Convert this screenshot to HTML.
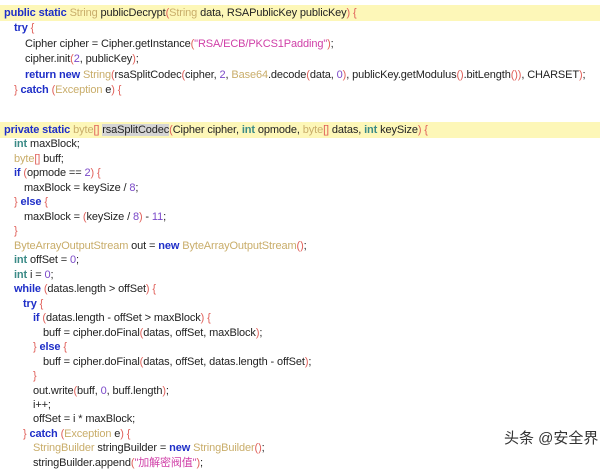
<!DOCTYPE html>
<html><head><meta charset="utf-8"><style>
body{margin:0;width:611px;height:459px;background:#fff;overflow:hidden;position:relative;font-family:"Liberation Sans",Arial,sans-serif;font-size:11px;color:#222;letter-spacing:-0.12px}
.l{position:absolute;white-space:pre;line-height:15px;height:15px}
.hl{position:absolute;left:0;width:600px;height:16px;background:#fdf7b8}
.k{color:#1f2fc8;font-weight:bold}
.t{color:#c9ad6a}
.i{color:#3a8a86;font-weight:bold}
.p{color:#e0605a}
.s{color:#d040a8}
.n{color:#7a48c8}
.sel{background:#d4d4d4}
.wm{position:absolute;left:504px;top:427px;font-family:"Liberation Sans","Noto Sans CJK SC",sans-serif;font-size:15px;color:#333;letter-spacing:0}
</style></head><body>
<div class="hl" style="top:5px"></div>
<div class="hl" style="top:122px"></div>
<div class="l" style="left:4px;top:6px"><span class="k">public static</span> <span class="t">String</span> publicDecrypt<span class="p">(</span><span class="t">String</span> data, RSAPublicKey publicKey<span class="p">) {</span></div>
<div class="l" style="left:14px;top:21px"><span class="k">try</span> <span class="p">{</span></div>
<div class="l" style="left:25px;top:37px">Cipher cipher = Cipher.getInstance<span class="p">(</span><span class="s">"RSA/ECB/PKCS1Padding"</span><span class="p">)</span>;</div>
<div class="l" style="left:25px;top:52px">cipher.init<span class="p">(</span><span class="n">2</span>, publicKey<span class="p">)</span>;</div>
<div class="l" style="left:25px;top:68px"><span class="k">return new</span> <span class="t">String</span><span class="p">(</span>rsaSplitCodec<span class="p">(</span>cipher, <span class="n">2</span>, <span class="t">Base64</span>.decode<span class="p">(</span>data, <span class="n">0</span><span class="p">)</span>, publicKey.getModulus<span class="p">()</span>.bitLength<span class="p">())</span>, CHARSET<span class="p">)</span>;</div>
<div class="l" style="left:14px;top:83px"><span class="p">}</span> <span class="k">catch</span> <span class="p">(</span><span class="t">Exception</span> e<span class="p">) {</span></div>
<div class="l" style="left:4px;top:123px"><span class="k">private static</span> <span class="t">byte</span><span class="p">[]</span> <span class="sel">rsaSplitCodec</span><span class="p">(</span>Cipher cipher, <span class="i">int</span> opmode, <span class="t">byte</span><span class="p">[]</span> datas, <span class="i">int</span> keySize<span class="p">) {</span></div>
<div class="l" style="left:14px;top:137px"><span class="i">int</span> maxBlock;</div>
<div class="l" style="left:14px;top:152px"><span class="t">byte</span><span class="p">[]</span> buff;</div>
<div class="l" style="left:14px;top:166px"><span class="k">if</span> <span class="p">(</span>opmode == <span class="n">2</span><span class="p">) {</span></div>
<div class="l" style="left:24px;top:181px">maxBlock = keySize / <span class="n">8</span>;</div>
<div class="l" style="left:14px;top:195px"><span class="p">}</span> <span class="k">else</span> <span class="p">{</span></div>
<div class="l" style="left:24px;top:210px">maxBlock = <span class="p">(</span>keySize / <span class="n">8</span><span class="p">)</span> - <span class="n">11</span>;</div>
<div class="l" style="left:14px;top:224px"><span class="p">}</span></div>
<div class="l" style="left:14px;top:239px"><span class="t">ByteArrayOutputStream</span> out = <span class="k">new</span> <span class="t">ByteArrayOutputStream</span><span class="p">()</span>;</div>
<div class="l" style="left:14px;top:253px"><span class="i">int</span> offSet = <span class="n">0</span>;</div>
<div class="l" style="left:14px;top:268px"><span class="i">int</span> i = <span class="n">0</span>;</div>
<div class="l" style="left:14px;top:282px"><span class="k">while</span> <span class="p">(</span>datas.length &gt; offSet<span class="p">) {</span></div>
<div class="l" style="left:23px;top:297px"><span class="k">try</span> <span class="p">{</span></div>
<div class="l" style="left:33px;top:311px"><span class="k">if</span> <span class="p">(</span>datas.length - offSet &gt; maxBlock<span class="p">) {</span></div>
<div class="l" style="left:43px;top:326px">buff = cipher.doFinal<span class="p">(</span>datas, offSet, maxBlock<span class="p">)</span>;</div>
<div class="l" style="left:33px;top:340px"><span class="p">}</span> <span class="k">else</span> <span class="p">{</span></div>
<div class="l" style="left:43px;top:355px">buff = cipher.doFinal<span class="p">(</span>datas, offSet, datas.length - offSet<span class="p">)</span>;</div>
<div class="l" style="left:33px;top:369px"><span class="p">}</span></div>
<div class="l" style="left:33px;top:384px">out.write<span class="p">(</span>buff, <span class="n">0</span>, buff.length<span class="p">)</span>;</div>
<div class="l" style="left:33px;top:398px">i++;</div>
<div class="l" style="left:33px;top:412px">offSet = i * maxBlock;</div>
<div class="l" style="left:23px;top:427px"><span class="p">}</span> <span class="k">catch</span> <span class="p">(</span><span class="t">Exception</span> e<span class="p">) {</span></div>
<div class="l" style="left:33px;top:441px"><span class="t">StringBuilder</span> stringBuilder = <span class="k">new</span> <span class="t">StringBuilder</span><span class="p">()</span>;</div>
<div class="l" style="left:33px;top:456px">stringBuilder.append<span class="p">(</span><span class="s">"加解密阀值"</span><span class="p">)</span>;</div>
<div class="wm">头条 @安全界</div>
</body></html>
